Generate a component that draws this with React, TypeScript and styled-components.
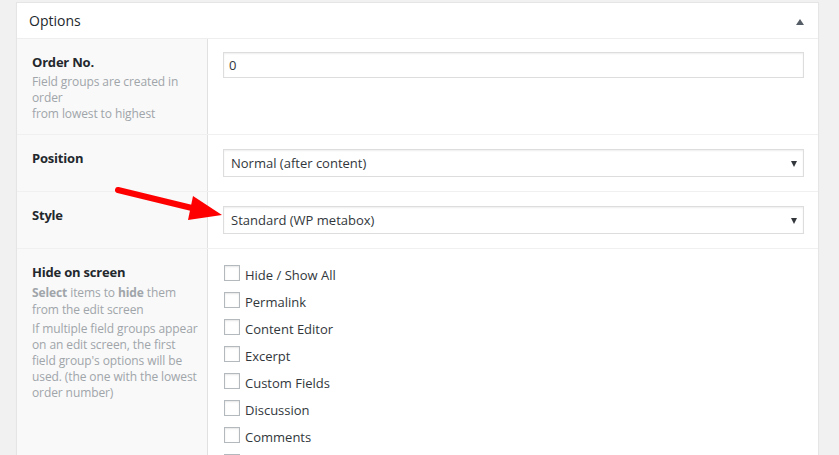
import React from "react";
import styled, { createGlobalStyle } from "styled-components";

const Global = createGlobalStyle`
  html, body { margin: 0; padding: 0; background: #f1f1f1; }
  body { font-family: "Open Sans", "Noto Sans", sans-serif; color: #23282d; overflow: hidden; }
`;

const Page = styled.div`
  position: relative;
  padding: 2px 20px 0 16px;
  height: 453px;
  overflow: hidden;
`;

const Panel = styled.div`
  background: #fff;
  border: 1px solid #e5e5e5;
  box-shadow: 0 1px 1px rgba(0,0,0,0.04);
`;

const Header = styled.div`
  display: flex;
  align-items: center;
  justify-content: space-between;
  height: 35px;
  padding: 0 14px 0 12px;
  border-bottom: 1px solid #eee;
  font-size: 14px;
  color: #23282d;
`;

const Toggle = styled.span`
  width: 0; height: 0;
  border-left: 4px solid transparent;
  border-right: 4px solid transparent;
  border-bottom: 6px solid #555d66;
  margin-top: 2px;
`;

const Row = styled.div`
  display: grid;
  grid-template-columns: 191px 1fr;
  border-top: ${p => (p.$first ? "none" : "1px solid #f0f0f0")};
`;

const LabelCell = styled.div`
  background: #f9f9f9;
  border-right: 1px solid #e1e1e1;
  padding: 13px 12px 12px 15px;
`;

const Label = styled.div`
  font-size: 13px;
  font-weight: 700;
  line-height: 20px;
  letter-spacing: -0.2px;
  color: #23282d;
`;

const Desc = styled.p`
  margin: ${p => (p.$gap ? "3px" : "2px")} 0 0;
  font-size: 12px;
  line-height: ${p => (p.$tall ? "17px" : "16px")};
  color: #a0a5aa;
  letter-spacing: -0.1px;
  white-space: nowrap;
  b { font-weight: 700; }
`;

const FieldCell = styled.div`
  padding: ${p => p.$pad || "14px 14px 14px 15px"};
`;

const TextInput = styled.div`
  height: 26px;
  box-sizing: border-box;
  border: 1px solid #ddd;
  box-shadow: inset 0 1px 2px rgba(0,0,0,0.07);
  padding: 0 5px;
  display: flex;
  align-items: center;
  font-size: 13px;
  color: #32373c;
`;

const Select = styled.div`
  position: relative;
  height: 28px;
  box-sizing: border-box;
  border: 1px solid #ddd;
  box-shadow: inset 0 1px 2px rgba(0,0,0,0.07);
  padding: 0 7px;
  display: flex;
  align-items: center;
  font-size: 13px;
  color: #32373c;
  &::after {
    content: "";
    position: absolute;
    right: 6px;
    top: 11px;
    border-left: 3.5px solid transparent;
    border-right: 3.5px solid transparent;
    border-top: 6px solid #32373c;
  }
`;

const CheckList = styled.ul`
  list-style: none;
  margin: 0;
  padding: 0;
  display: flex;
  flex-direction: column;
  gap: 11px;
`;

const CheckItem = styled.li`
  display: flex;
  align-items: center;
  gap: 5px;
  height: 16px;
  font-size: 13px;
  color: #32373c;
  span:last-child { margin-top: 3px; }
`;

const Box = styled.span`
  width: 16px;
  height: 16px;
  box-sizing: border-box;
  border: 1px solid #b4b9be;
  background: #fff;
  box-shadow: inset 0 1px 2px rgba(0,0,0,0.1);
  flex: none;
`;

const ArrowOverlay = styled.svg`
  position: absolute;
  left: 0;
  top: 0;
  pointer-events: none;
`;

const items = [
  "Hide / Show All",
  "Permalink",
  "Content Editor",
  "Excerpt",
  "Custom Fields",
  "Discussion",
  "Comments",
  "Revisions",
];

export default function App() {
  return (
    <>
      <Global />
      <Page>
        <Panel>
          <Header>
            <span>Options</span>
            <Toggle />
          </Header>
          <Row $first>
            <LabelCell>
              <Label>Order No.</Label>
              <Desc>Field groups are created in<br />order<br />from lowest to highest</Desc>
            </LabelCell>
            <FieldCell $pad="13px 14px 14px 15px">
              <TextInput>0</TextInput>
            </FieldCell>
          </Row>
          <Row>
            <LabelCell>
              <Label>Position</Label>
            </LabelCell>
            <FieldCell>
              <Select>Normal (after content)</Select>
            </FieldCell>
          </Row>
          <Row>
            <LabelCell>
              <Label>Style</Label>
            </LabelCell>
            <FieldCell>
              <Select>Standard (WP metabox)</Select>
            </FieldCell>
          </Row>
          <Row>
            <LabelCell>
              <Label>Hide on screen</Label>
              <Desc $tall><b>Select</b> items to <b>hide</b> them<br />from the edit screen</Desc>
              <Desc $gap>If multiple field groups appear<br />on an edit screen, the first<br />field group's options will be<br />used. (the one with the lowest<br />order number)</Desc>
            </LabelCell>
            <FieldCell $pad="16px 14px 14px 16px">
              <CheckList>
                {items.map(i => (
                  <CheckItem key={i}>
                    <Box />
                    <span>{i}</span>
                  </CheckItem>
                ))}
              </CheckList>
            </FieldCell>
          </Row>
        </Panel>
        <ArrowOverlay width="839" height="455" viewBox="0 0 839 455">
          <line x1="118" y1="190" x2="196" y2="209" stroke="#ff0000" strokeWidth="6" strokeLinecap="round" />
          <polygon points="193,196 222,215 188,220" fill="#ff0000" />
        </ArrowOverlay>
      </Page>
    </>
  );
}
